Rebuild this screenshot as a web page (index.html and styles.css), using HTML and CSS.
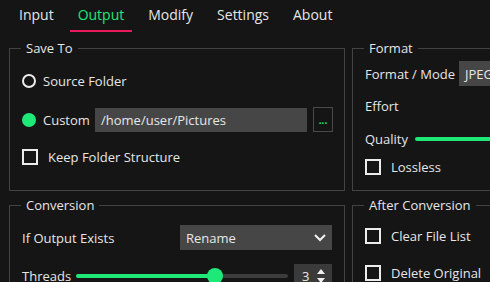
FILE: index.html
```html
<!DOCTYPE html>
<html lang="en">
<head>
    <meta charset="UTF-8">
    <title>Converter - Output</title>
    <link rel="stylesheet" href="styles.css">
</head>
<body>
    <nav class="tabs">
        <span class="tab">Input</span>
        <span class="tab active">Output</span>
        <span class="tab">Modify</span>
        <span class="tab">Settings</span>
        <span class="tab">About</span>
    </nav>

    <main class="panels">
        <section class="group save-to">
            <h2 class="group-title">Save To</h2>
            <div class="row">
                <span class="radio"></span>
                <span>Source Folder</span>
            </div>
            <div class="row">
                <span class="radio checked"></span>
                <span class="custom-label">Custom</span>
                <div class="path-field">/home/user/Pictures</div>
                <button class="browse-btn">...</button>
            </div>
            <div class="row">
                <span class="checkbox"></span>
                <span>Keep Folder Structure</span>
            </div>
        </section>

        <section class="group format">
            <h2 class="group-title">Format</h2>
            <div class="row row-mode">
                <span class="format-label">Format / Mode</span>
                <div class="combo combo-format">JPEG</div>
            </div>
            <div class="row row-effort">
                <span>Effort</span>
            </div>
            <div class="row row-quality">
                <span class="quality-label">Quality</span>
                <div class="quality-bar"></div>
            </div>
            <div class="row row-lossless">
                <span class="checkbox"></span>
                <span>Lossless</span>
            </div>
        </section>

        <section class="group conversion">
            <h2 class="group-title">Conversion</h2>
            <div class="row row-exists">
                <span class="exists-label">If Output Exists</span>
                <div class="combo combo-rename">
                    <span>Rename</span>
                    <svg width="14" height="10" viewBox="0 0 14 10">
                        <path d="M2 2l5 5 5-5" fill="none" stroke="#f0f0f0" stroke-width="2"/>
                    </svg>
                </div>
            </div>
            <div class="row row-threads">
                <span class="threads-label">Threads</span>
                <div class="slider">
                    <div class="slider-fill" style="width: 139px"></div>
                    <div class="slider-handle"></div>
                </div>
                <div class="spinbox">
                    <span>3</span>
                    <svg width="10" height="18" viewBox="0 0 10 18">
                        <path d="M5 2l4 5H1z" fill="#f0f0f0"/>
                        <path d="M5 16l4-5H1z" fill="#f0f0f0"/>
                    </svg>
                </div>
            </div>
        </section>

        <section class="group after">
            <h2 class="group-title">After Conversion</h2>
            <div class="row row-clear">
                <span class="checkbox"></span>
                <span>Clear File List</span>
            </div>
            <div class="row row-delete">
                <span class="checkbox"></span>
                <span>Delete Original</span>
            </div>
        </section>
    </main>
</body>
</html>
```

FILE: styles.css
```css
:root {
    --bg: #151515;
    --text: #e6e6e6;
    --green: #1ee878;
    --accent: #e8195c;
    --border: #424242;
    --field: #464646;
}

* {
    box-sizing: border-box;
    margin: 0;
    padding: 0;
}

body {
    font-family: 'Open Sans', 'Noto Sans', sans-serif;
    font-size: 13px;
    background-color: var(--bg);
    color: var(--text);
    width: 490px;
    height: 282px;
    overflow: hidden;
}

.tabs {
    display: flex;
    height: 32px;
    padding-left: 7px;
}

.tab {
    font-size: 14px;
    line-height: 30px;
    padding: 0 8px;
    margin: 0 4px;
    border-bottom: 2px solid transparent;
}

.tab.active {
    color: var(--green);
    border-bottom-color: var(--accent);
}

.panels {
    display: grid;
    grid-template-columns: 336px 150px;
    grid-template-rows: 143px 100px;
    column-gap: 7px;
    row-gap: 14px;
    padding-left: 9px;
    padding-top: 16px;
}

.group {
    border: 1px solid var(--border);
    padding: 0 12px;
    min-width: 0;
}

.group-title {
    display: block;
    width: fit-content;
    font-size: 13px;
    font-weight: 400;
    line-height: 16px;
    height: 16px;
    margin: -9px 0 0 -1px;
    padding: 0 5px;
    background-color: var(--bg);
}

.row {
    display: flex;
    align-items: center;
    height: 24px;
    white-space: nowrap;
}

.row > * {
    flex-shrink: 0;
}

/* Save To */
.save-to .row:nth-of-type(1) { margin-top: 13px; }
.save-to .row:nth-of-type(2) { margin-top: 14px; height: 25px; }
.save-to .row:nth-of-type(3) { margin-top: 13px; }

.radio {
    width: 14px;
    height: 14px;
    border-radius: 50%;
    border: 2px solid #ececec;
    margin-right: 7px;
}

.radio.checked {
    background-color: var(--green);
    border-color: var(--green);
}

.custom-label {
    width: 52px;
}

.path-field {
    width: 212px;
    height: 24px;
    line-height: 24px;
    background-color: var(--field);
    padding-left: 6px;
}

.browse-btn {
    width: 20px;
    height: 25px;
    margin-left: 6px;
    background: transparent;
    border: 1px solid #4a4a4a;
    color: var(--green);
    font-family: inherit;
    font-size: 10px;
    font-weight: 700;
    line-height: 20px;
}

.checkbox {
    width: 16px;
    height: 16px;
    border: 2px solid #ececec;
    margin-right: 10px;
}

/* Format */
.format .row-mode { margin-top: 5px; height: 25px; }
.format-label { width: 94px; }
.combo {
    background-color: var(--field);
    height: 25px;
    display: flex;
    align-items: center;
    padding: 0 6px;
}
.combo-format { width: 60px; }
.format .row-effort { margin-top: 8px; height: 24px; }
.format .row-quality { margin-top: 9px; }
.quality-label { width: 50px; }
.quality-bar {
    height: 4px;
    width: 100px;
    background-color: var(--green);
    border-radius: 2px;
}
.format .row-lossless { margin-top: 4px; }

/* Conversion */
.conversion .row-exists { margin-top: 12px; height: 25px; }
.exists-label { width: 158px; }
.combo-rename {
    width: 152px;
    justify-content: space-between;
    padding-right: 5px;
}
.conversion .row-threads { margin-top: 14px; align-items: flex-start; }
.threads-label { width: 54px; padding-top: 3px; }
.slider {
    position: relative;
    width: 212px;
    height: 4px;
    margin-top: 10px;
    background-color: #3c3c3c;
    border-radius: 2px;
}
.slider-fill {
    height: 4px;
    background-color: var(--green);
    border-radius: 2px;
}
.slider-handle {
    position: absolute;
    left: 131px;
    top: -6px;
    width: 16px;
    height: 16px;
    border-radius: 50%;
    background-color: var(--green);
}
.spinbox {
    width: 38px;
    height: 24px;
    margin-left: 6px;
    background-color: #3a3a3a;
    display: flex;
    align-items: center;
    justify-content: space-between;
    padding: 0 6px 0 8px;
}

/* After Conversion */
.after .row-clear { margin-top: 11px; }
.after .row-delete { margin-top: 13px; }
```
